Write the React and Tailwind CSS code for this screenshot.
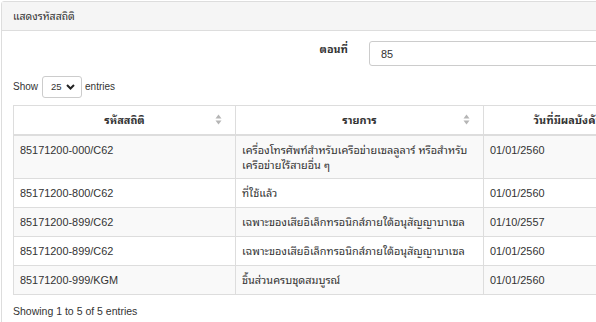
import React from 'react';

const rows = [
  { code: '85171200-000/C62', name: ['เครื่องโทรศัพท์สำหรับเครือข่ายเซลลูลาร์ หรือสำหรับ', 'เครือข่ายไร้สายอื่น ๆ'], date: '01/01/2560' },
  { code: '85171200-800/C62', name: ['ที่ใช้แล้ว'], date: '01/01/2560' },
  { code: '85171200-899/C62', name: ['เฉพาะของเสียอิเล็กทรอนิกส์ภายใต้อนุสัญญาบาเซล'], date: '01/10/2557' },
  { code: '85171200-899/C62', name: ['เฉพาะของเสียอิเล็กทรอนิกส์ภายใต้อนุสัญญาบาเซล'], date: '01/01/2560' },
  { code: '85171200-999/KGM', name: ['ชิ้นส่วนครบชุดสมบูรณ์'], date: '01/01/2560' },
];

function SortIcon() {
  return (
    <svg width="7" height="11" viewBox="0 0 7 11" className="shrink-0">
      <path d="M3.5 0.5 L6.5 4.5 L0.5 4.5 Z" fill="#b5b5b5" />
      <path d="M3.5 10.5 L6.5 6.5 L0.5 6.5 Z" fill="#b5b5b5" />
    </svg>
  );
}

function App() {
  return (
    <div
      className="w-[596px] h-[322px] overflow-hidden bg-white text-[#333] text-[10.9px] leading-[16px]"
      style={{ fontFamily: '"Liberation Sans", "Noto Sans Thai Looped", "Noto Sans Thai", "Noto Sans", Arial, sans-serif' }}
    >
      <div className="ml-px mt-px w-[700px] border border-[#ddd] rounded-[3px]">
        <div className="h-[29px] bg-[#f5f5f5] border-b border-[#ddd] px-[11px] flex items-center text-[10.5px]">
          แสดงรหัสสถิติ
        </div>
        <div className="px-[11px]">
          <div className="flex items-start pt-[10px] h-[44px]">
            <div className="w-[335px] text-right font-bold text-[10.8px]">ตอนที่</div>
            <div className="ml-[21px] w-[300px] h-[25px] border border-[#ccc] rounded-[3px] flex items-center pl-[11px]">
              85
            </div>
          </div>
          <div className="flex items-center h-[22px] mt-[1px] text-[10px]">
            <span>Show</span>
            <div className="ml-[4px] w-[40px] h-[22px] border border-[#ccc] rounded-[3px] flex items-center pl-[8px] text-[9.5px]">
              <span>25</span>
              <svg width="9" height="6" viewBox="0 0 9 6" className="ml-[4px]">
                <path d="M1 1 L4.5 4.5 L8 1" stroke="#222" strokeWidth="2" fill="none" />
              </svg>
            </div>
            <span className="ml-[3px]">entries</span>
          </div>
          <table className="mt-[7px] border-collapse border border-[#ddd] table-fixed">
            <thead>
              <tr className="h-[29px]">
                {[
                  ['รหัสสถิติ', 'w-[222px]'],
                  ['รายการ', 'w-[248px]'],
                  ['วันที่มีผลบังคับใช้', 'w-[180px]'],
                ].map(([t, w]) => (
                  <th key={t} className={`${w} border border-[#ddd] border-b-2 pl-[20px] pr-[13px] py-0 font-bold`}>
                    <div className="flex items-center h-[16px]">
                      <span className="flex-1 text-center">{t}</span>
                      <SortIcon />
                    </div>
                  </th>
                ))}
              </tr>
            </thead>
            <tbody>
              {rows.map((r, i) => (
                <tr key={i} className={i % 2 === 0 ? 'bg-[#f9f9f9]' : 'bg-white'}>
                  <td className="border border-[#ddd] px-[6px] py-[6px] align-top">
                    <div className="h-[16px]">{r.code}</div>
                  </td>
                  <td className="border border-[#ddd] px-[6px] py-[6px] align-top">
                    {r.name.map((l, j) => (
                      <div key={j} className="h-[15px] whitespace-nowrap">{l}</div>
                    ))}
                  </td>
                  <td className="border border-[#ddd] px-[6px] py-[6px] align-top">
                    <div className="h-[16px]">{r.date}</div>
                  </td>
                </tr>
              ))}
            </tbody>
          </table>
          <div className="pt-[8px] pb-[8px] text-[10.5px]">Showing 1 to 5 of 5 entries</div>
        </div>
      </div>
    </div>
  );
}

export default App;
